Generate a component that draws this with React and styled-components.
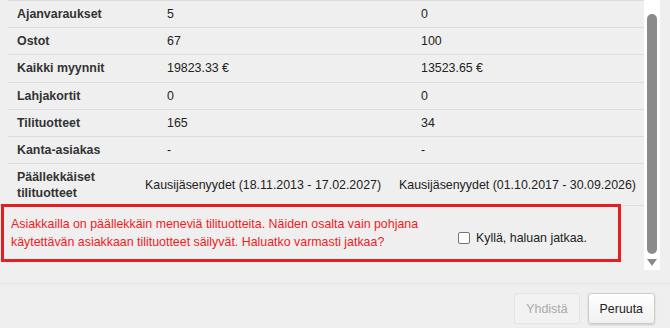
import styled, { createGlobalStyle } from "styled-components";

const GlobalStyle = createGlobalStyle`
  html, body {
    margin: 0;
    padding: 0;
    background: #efefef;
    font-family: "Liberation Sans", Arial, sans-serif;
    font-size: 12.4px;
    color: #222;
  }
`;

const Page = styled.div`
  width: 670px;
  height: 328px;
  display: flex;
  flex-direction: column;
  overflow: hidden;
`;

const ScrollArea = styled.div`
  height: 270px;
  display: flex;
  padding-right: 10px;
`;

const Content = styled.div`
  flex: 1;
  display: flex;
  flex-direction: column;
  overflow: hidden;
`;

const Table = styled.div`
  margin-left: 8px;
  border-top: 1px solid #dddddd;
`;

const Row = styled.div`
  display: grid;
  grid-template-columns: 159px 254px 1fr;
  align-items: center;
  height: ${(p) => (p.$tall ? "41px" : "26.2px")};
  border-bottom: 1px solid #dddddd;
`;

const Label = styled.div`
  padding-left: 9px;
  font-weight: bold;
  color: #333;
  line-height: 16px;
  width: 110px;
`;

const Value = styled.div`
  margin-left: ${(p) => (p.$wide ? "-22px" : "0")};
  white-space: nowrap;
  color: #222;
`;

const Warning = styled.div`
  margin: -2px 23px 0 1px;
  border: 3px solid #e41e23;
  padding: 8px 8px 8px 7px;
  display: flex;
  align-items: center;
`;

const WarningText = styled.p`
  margin: 0;
  width: 410px;
  color: #ee1c25;
  line-height: 18px;
`;

const Confirm = styled.label`
  display: flex;
  align-items: center;
  gap: 6px;
  margin: 10px 0 0 37px;
  color: #222;
`;

const Checkbox = styled.span`
  width: 10px;
  height: 10px;
  border: 1px solid #767676;
  border-radius: 2px;
  background: #fff;
`;

const Scrollbar = styled.div`
  width: 16px;
  background: #fff;
  display: flex;
  flex-direction: column;
  align-items: center;
  padding-top: 14px;
  box-sizing: border-box;
`;

const Thumb = styled.div`
  width: 10px;
  height: 240px;
  border-radius: 5px;
  background: #8b8b8b;
`;

const Arrow = styled.div`
  margin-top: 5px;
  width: 0;
  height: 0;
  border-left: 5px solid transparent;
  border-right: 5px solid transparent;
  border-top: 7px solid #8b8b8b;
`;

const Footer = styled.div`
  margin-top: 13px;
  flex: 1;
  border-top: 1px solid #e3e3e3;
  display: flex;
  justify-content: flex-end;
  align-items: flex-start;
  gap: 8px;
  padding: 9px 15px 0 0;
`;

const Button = styled.button`
  height: 31px;
  padding: 0 11px;
  font-family: inherit;
  font-size: 12.4px;
  border-radius: 3px;
  border: 1px solid ${(p) => (p.disabled ? "#e3e3e3" : "#cccccc")};
  background: ${(p) =>
    p.disabled ? "#f2f2f2" : "linear-gradient(#ffffff, #f0f0f0)"};
  color: ${(p) => (p.disabled ? "#a9a9a9" : "#222")};
  box-shadow: ${(p) => (p.disabled ? "none" : "0 1px 2px rgba(0,0,0,0.15)")};
`;

const rows = [
  ["Ajanvaraukset", "5", "0"],
  ["Ostot", "67", "100"],
  ["Kaikki myynnit", "19823.33 €", "13523.65 €"],
  ["Lahjakortit", "0", "0"],
  ["Tilituotteet", "165", "34"],
  ["Kanta-asiakas", "-", "-"],
];

export default function App() {
  return (
    <Page>
      <GlobalStyle />
      <ScrollArea>
        <Content>
          <Table>
            {rows.map(([label, a, b]) => (
              <Row key={label}>
                <Label>{label}</Label>
                <Value>{a}</Value>
                <Value>{b}</Value>
              </Row>
            ))}
            <Row $tall>
              <Label>Päällekkäiset tilituotteet</Label>
              <Value $wide>Kausijäsenyydet (18.11.2013 - 17.02.2027)</Value>
              <Value $wide>Kausijäsenyydet (01.10.2017 - 30.09.2026)</Value>
            </Row>
          </Table>
          <Warning>
            <WarningText>
              Asiakkailla on päällekkäin meneviä tilituotteita. Näiden osalta vain
              pohjana käytettävän asiakkaan tilituotteet säilyvät. Haluatko
              varmasti jatkaa?
            </WarningText>
            <Confirm>
              <Checkbox />
              Kyllä, haluan jatkaa.
            </Confirm>
          </Warning>
        </Content>
        <Scrollbar>
          <Thumb />
          <Arrow />
        </Scrollbar>
      </ScrollArea>
      <Footer>
        <Button disabled>Yhdistä</Button>
        <Button>Peruuta</Button>
      </Footer>
    </Page>
  );
}
